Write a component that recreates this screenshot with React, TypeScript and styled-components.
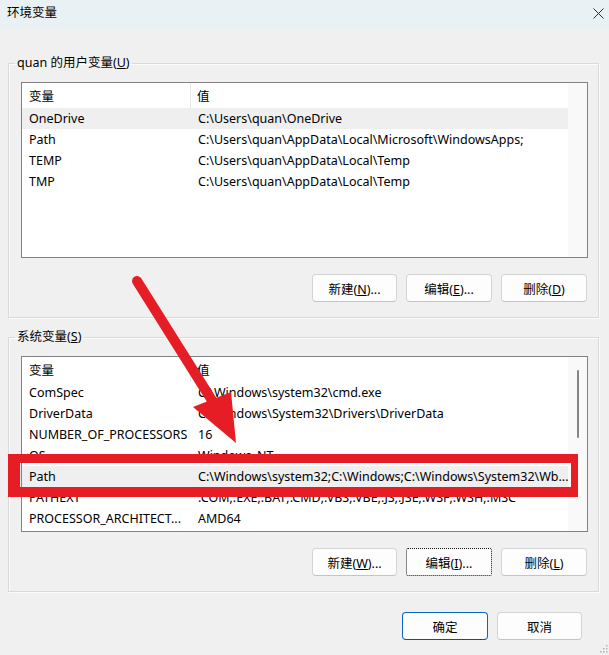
import React from "react";
import styled, { createGlobalStyle, css } from "styled-components";

const Global = createGlobalStyle`
  html, body { margin: 0; padding: 0; background: #f0f0f0; }
  body { font-family: "Segoe UI", "Noto Sans", "Noto Sans CJK SC", sans-serif; }
`;

const Window = styled.div`
  position: relative;
  width: 609px;
  height: 655px;
  background: #f0f0f0;
  overflow: hidden;
  font-size: 12.5px;
  color: #000;
  display: flex;
  flex-direction: column;
`;

const TitleBar = styled.div`
  height: 29px;
  flex: none;
  background: #e9f1f4;
  display: flex;
  align-items: flex-start;
  justify-content: space-between;
  padding-left: 7px;
  box-sizing: border-box;
`;

const Title = styled.span`
  font-size: 12.5px;
  line-height: 16px;
  padding-top: 5px;
`;

const CloseBtn = styled.div`
  width: 22px;
  height: 26px;
  display: flex;
  align-items: center;
  justify-content: center;
`;

const Main = styled.div`
  display: flex;
  flex-direction: column;
  padding: 26px 10px 0 8px;
`;

const Group = styled.fieldset<{ $gapTop?: number }>`
  margin: ${(p) => p.$gapTop ?? 0}px 0 0 0;
  padding: 11px 10px 15px 12px;
  border: 1px solid #dadada;
  box-shadow: inset 1px 1px 0 #fbfbfb, 1px 1px 0 #fbfbfb;
  min-width: 0;
`;

const Legend = styled.legend`
  padding: 0 2px;
  margin-left: -6px;
  font-size: 12.5px;
  line-height: 16px;
`;

const List = styled.div`
  height: 176px;
  box-sizing: border-box;
  border: 1px solid #828282;
  background: #fff;
  display: flex;
  overflow: hidden;
`;

const Table = styled.div`
  flex: 1;
  min-width: 0;
  display: flex;
  flex-direction: column;
  overflow: hidden;
`;

const Gutter = styled.div`
  width: 19px;
  flex: none;
  background: #f9f9f9;
  display: flex;
  justify-content: center;
`;

const Thumb = styled.div`
  margin-top: 13px;
  width: 2px;
  height: 68px;
  border-radius: 1px;
  background: #858585;
`;

const Header = styled.div`
  display: grid;
  grid-template-columns: 169px 1fr;
  height: 25px;
  flex: none;
`;

const HeadCell = styled.div<{ $first?: boolean }>`
  display: flex;
  align-items: center;
  box-sizing: border-box;
  padding-left: ${(p) => (p.$first ? "7px" : "6px")};
  ${(p) =>
    p.$first &&
    css`
      border-right: 1px solid #e5e5e5;
    `}
`;

const Row = styled.div<{ $selected?: boolean }>`
  display: grid;
  grid-template-columns: 169px 1fr;
  height: 21px;
  flex: none;
  background: ${(p) => (p.$selected ? "#efefef" : "transparent")};
`;

const Cell = styled.div`
  padding-left: 7px;
  line-height: 21px;
  white-space: nowrap;
  overflow: hidden;
`;

const ButtonRow = styled.div<{ $top: number; $right: number }>`
  display: flex;
  justify-content: flex-end;
  gap: 9px;
  margin-top: ${(p) => p.$top}px;
  padding-right: ${(p) => p.$right}px;
`;

const Btn = styled.button<{ $focus?: boolean; $primary?: boolean; $w?: number }>`
  width: ${(p) => p.$w ?? 85}px;
  height: 28px;
  box-sizing: border-box;
  padding: 0;
  border: 1px solid #d4d4d4;
  border-bottom-color: #c4c4c4;
  border-radius: 4px;
  background: #fdfdfd;
  font-family: inherit;
  font-size: 12.5px;
  color: #000;
  ${(p) =>
    p.$primary &&
    css`
      border-color: #0a67bd;
      border-bottom-color: #005499;
    `}
  ${(p) =>
    p.$focus &&
    css`
      border: 1px dotted #111;
      border-radius: 2px;
    `}
`;

const RedBox = styled.div`
  position: absolute;
  left: 8px;
  top: 454px;
  width: 570px;
  height: 43px;
  box-sizing: border-box;
  border-style: solid;
  border-color: #e61d25;
  border-width: 9px 7px 10px 12px;
  pointer-events: none;
`;

const Overlay = styled.svg`
  position: absolute;
  left: 0;
  top: 0;
  pointer-events: none;
`;

const Grip = styled.svg`
  position: absolute;
  right: 1px;
  bottom: 2px;
`;

type Item = [string, string];

const userVars: Item[] = [
  ["OneDrive", "C:\\Users\\quan\\OneDrive"],
  ["Path", "C:\\Users\\quan\\AppData\\Local\\Microsoft\\WindowsApps;"],
  ["TEMP", "C:\\Users\\quan\\AppData\\Local\\Temp"],
  ["TMP", "C:\\Users\\quan\\AppData\\Local\\Temp"],
];

const sysVars: Item[] = [
  ["ComSpec", "C:\\Windows\\system32\\cmd.exe"],
  ["DriverData", "C:\\Windows\\System32\\Drivers\\DriverData"],
  ["NUMBER_OF_PROCESSORS", "16"],
  ["OS", "Windows_NT"],
  ["Path", "C:\\Windows\\system32;C:\\Windows;C:\\Windows\\System32\\Wb..."],
  ["PATHEXT", ".COM;.EXE;.BAT;.CMD;.VBS;.VBE;.JS;.JSE;.WSF;.WSH;.MSC"],
  ["PROCESSOR_ARCHITECT...", "AMD64"],
];

function VarList({ items, selected, scroll }: { items: Item[]; selected: number; scroll?: boolean }) {
  return (
    <List>
      <Table>
        <Header>
          <HeadCell $first>变量</HeadCell>
          <HeadCell>值</HeadCell>
        </Header>
        {items.map(([k, v], i) => (
          <Row key={k + i} $selected={i === selected}>
            <Cell>{k}</Cell>
            <Cell>{v}</Cell>
          </Row>
        ))}
      </Table>
      <Gutter>{scroll && <Thumb />}</Gutter>
    </List>
  );
}

export default function App() {
  return (
    <Window>
      <Global />
      <TitleBar>
        <Title>环境变量</Title>
        <CloseBtn>
          <svg width="11" height="11" viewBox="0 0 11 11">
            <path d="M0.5 0.5 L10.5 10.5 M10.5 0.5 L0.5 10.5" stroke="#2b2b2b" strokeWidth="1" fill="none" />
          </svg>
        </CloseBtn>
      </TitleBar>
      <Main>
        <Group>
          <Legend>
            quan 的用户变量(<u>U</u>)
          </Legend>
          <VarList items={userVars} selected={0} />
          <ButtonRow $top={16} $right={1}>
            <Btn>
              新建(<u>N</u>)...
            </Btn>
            <Btn $w={86}>
              编辑(<u>E</u>)...
            </Btn>
            <Btn $w={86}>
              删除(<u>D</u>)
            </Btn>
          </ButtonRow>
        </Group>
        <Group $gapTop={11}>
          <Legend>
            系统变量(<u>S</u>)
          </Legend>
          <VarList items={sysVars} selected={4} scroll />
          <ButtonRow $top={16} $right={1}>
            <Btn>
              新建(<u>W</u>)...
            </Btn>
            <Btn $w={86} $focus>
              编辑(<u>I</u>)...
            </Btn>
            <Btn $w={86}>
              删除(<u>L</u>)
            </Btn>
          </ButtonRow>
        </Group>
        <ButtonRow $top={20} $right={17}>
          <Btn $w={86} $primary>
            确定
          </Btn>
          <Btn $w={85}>取消</Btn>
        </ButtonRow>
      </Main>
      <RedBox />
      <Overlay width="609" height="655" viewBox="0 0 609 655">
        <line x1="137" y1="281" x2="213" y2="402" stroke="#e61d25" strokeWidth="10" strokeLinecap="round" />
        <polygon points="193,407 231,392 236,443" fill="#e61d25" />
      </Overlay>
      <Grip width="8" height="8" viewBox="0 0 8 8">
        <g fill="#b5b5b5">
          <rect x="6" y="0" width="1.5" height="1.5" />
          <rect x="3" y="3" width="1.5" height="1.5" />
          <rect x="6" y="3" width="1.5" height="1.5" />
          <rect x="0" y="6" width="1.5" height="1.5" />
          <rect x="3" y="6" width="1.5" height="1.5" />
          <rect x="6" y="6" width="1.5" height="1.5" />
        </g>
      </Grip>
    </Window>
  );
}
